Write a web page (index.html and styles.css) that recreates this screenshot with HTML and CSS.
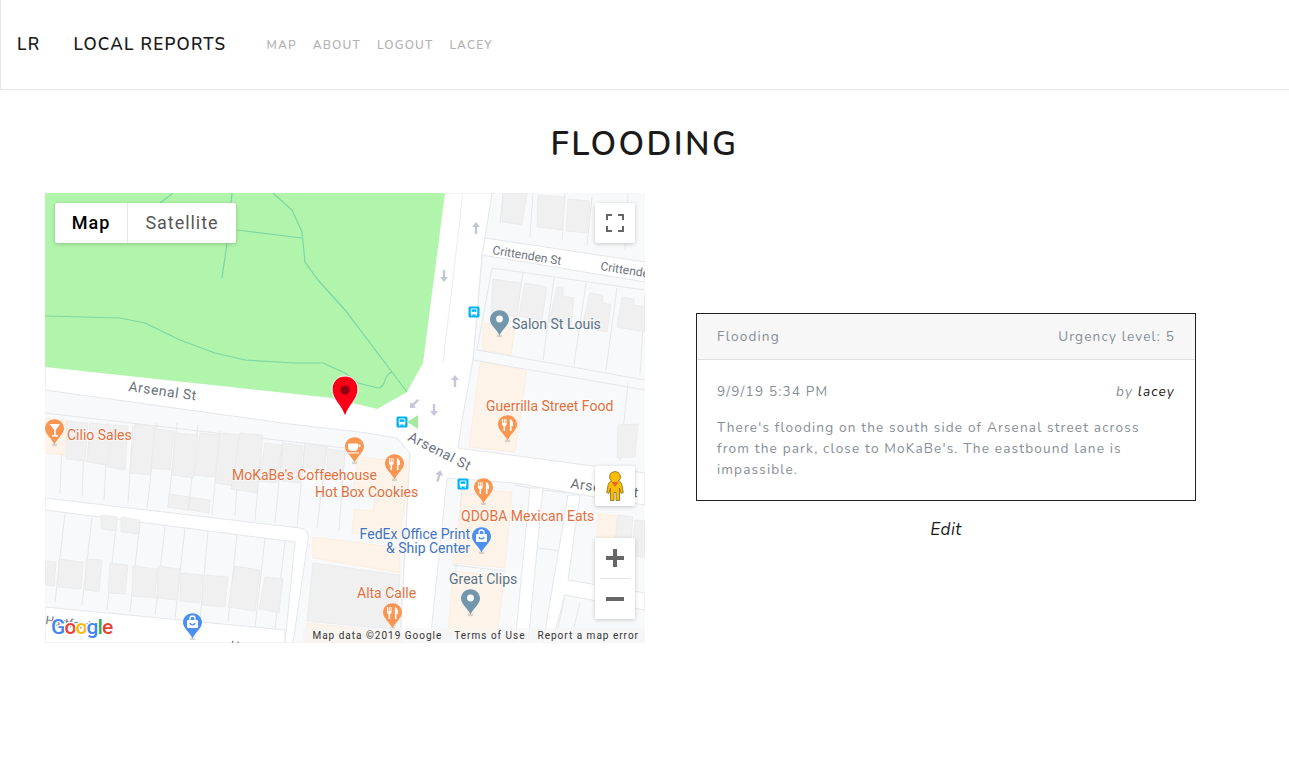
FILE: index.html
```html
<!DOCTYPE html>
<html lang="en">
<head>
<meta charset="utf-8">
<title>Flooding - Local Reports</title>
<link rel="stylesheet" href="styles.css">
</head>
<body>
<nav class="navbar">
  <a class="brand brand-short">LR</a>
  <a class="brand brand-long">LOCAL REPORTS</a>
  <ul class="nav-links">
    <li>MAP</li><li>ABOUT</li><li>LOGOUT</li><li>LACEY</li>
  </ul>
</nav>
<h1 class="page-title">FLOODING</h1>
<main class="content">
  <section class="map">
    <svg class="map-canvas" width="600" height="450" viewBox="0 0 600 450" xmlns="http://www.w3.org/2000/svg">
      <defs>
        <symbol id="pin" viewBox="0 0 20 29" overflow="visible">
          <ellipse cx="10" cy="27" rx="3" ry="1.500" fill="#000" opacity=".14"/>
          <path d="M10 0C4.500 0 0 4.400 0 9.800 0 16 6.800 19.500 10 26.500 13.200 19.500 20 16 20 9.800 20 4.400 15.500 0 10 0Z"/>
        </symbol>
        <g id="fork" fill="#fff">
          <path d="M-5.500-6h1v4h.8v-4h1v4h.8v-4h1v5.300c0 1-.7 1.600-1.500 1.800V6h-1.600V1.100c-.8-.2-1.500-.8-1.500-1.800Z"/>
          <path d="M2.400 6V-6c2 .5 3.200 2.600 3.200 5.500V1H4V6Z"/>
        </g>
        <g id="bus">
          <rect x="-5.500" y="-5.500" width="11" height="11" rx="1.500" fill="#00b3f0"/>
          <rect x="-3.300" y="-3.500" width="6.600" height="6" rx="1" fill="#fff"/>
          <rect x="-2.400" y="-2.600" width="4.800" height="2.400" fill="#00b3f0"/>
          <rect x="-3" y="2.500" width="1.500" height="1.200" fill="#fff"/>
          <rect x="1.500" y="2.500" width="1.500" height="1.200" fill="#fff"/>
        </g>
        <path id="arrow-up" d="M0-6 4-1H1.200V6H-1.200V-1H-4Z" fill="#c4c7da"/>
        <g id="bag" fill="none" stroke="#fff" stroke-width="1.300">
          <rect x="-5.500" y="-3" width="11" height="8" rx="1" fill="#fff" stroke="none"/>
          <path d="M-2.500-3V-4.500A2.500 2.500 0 0 1 2.500-4.500V-3"/>
          <path d="M-2.500 0C-2 2.500 2 2.500 2.500 0" stroke="#4b8ff0"/>
        </g>
      </defs>

      <rect class="ground" width="600" height="450"/>

      <!-- parcel lines -->
      <g class="parcels">
        <path d="M0 220 300 255"/>
        <path d="M18 225 15 300M40 229 37 304M63 230 59 307M88 232 83 310M112 230 102 315M132 230 123 315M153 232 143 318M175 238 167 322M195 240 190 323M217 245 210 328M238 247 230 330M260 250 252 334M282 253 272 335M300 255 294 338"/>
        <path d="M20 320 10 409M47 324 37 412M72 325 62 417M95 329 85 419M120 334 110 422M140 335 130 425M163 339 155 427M192 342 183 429M220 345 210 434M240 348 230 435"/>
        <path d="M488 0 485 44M520 0 517 47M547 4 542 52M583 0 580 57"/>
        <path d="M458 0 455 30"/>
        <path d="M447 75 600 97M447 75 432 157"/>
        <path d="M478 80 465 162M509 85 498 167M541 90 529 172M572 95 561 177M600 100 595 182"/>
        <path d="M432 157 600 187M428 167 600 197M437 62 428 167"/>
        <path d="M583 190 575 268"/>
        <path d="M417 295 405 450"/>
        <path d="M408 372 460 378"/>
        <path d="M365 260 355 450"/>
        <path d="M470 292 485 295"/>
        <path d="M498 297 522 300M493 355 516 358"/>
        <path d="M575 322 568 390"/>
        <path d="M520 402 510 450M535 410 525 450"/>
      </g>

      <!-- roads -->
      <g class="roads">
        <path d="M400 0H447L440 45 437 62 428 167 417 227 413 255 600 280V312L550 304 470 290 402 285 385 450H355L365 260 352 245 322 240 245 231 0 197V174Z"/>
        <path d="M440 45 600 69V89L437 62Z"/>
        <path d="M0 305 255 335Q265 337 263 347L248 450H240L250 349 0 317Z"/>
        <path d="M0 414 240 437V450H0Z"/>
        <path d="M485 295H498L483 450H470Z"/>
        <path d="M523 302H535L523 387 600 400V417L520 402 507 450H498Z"/>
      </g>
      <path class="median" d="M418 0 398 170"/>

      <!-- footprints -->
      <g class="footprint">
        <path d="M438 130 470 135 466 162 438 157Z"/>
        <path d="M435 170 482 177 470 259 424 254Z"/>
        <path d="M-2 225 22 228 19 262 -2 260Z"/>
        <path d="M313 264 365 269 355 345 307 340 309 316 328 318 330 300 308 298Z"/>
        <path d="M268 344 355 355 355 380 268 365Z"/>
        <path d="M418 297 467 299 460 375 408 370Z"/>
        <path d="M408 378 460 383 452 440 403 440Z"/>
        <path d="M262 430 355 440 352 450H262Z"/>
        <path d="M553 320 572 323 567 370 550 365Z"/>
      </g>

      <!-- buildings -->
      <g class="buildings">
        <path d="M458 0 482 0 477 32 457 29Z"/>
        <path d="M493 2 520 4 517 37 492 34Z"/>
        <path d="M523 6 545 8 542 40 521 38Z"/>
        <path d="M448 86 476 90 472 124 446 119Z"/>
        <path d="M480 90 502 94 497 127 474 123Z"/>
        <path d="M512 94 518 94 518 103 529 105 526 132 504 129Z"/>
        <path d="M545 100 558 102 558 110 566 112 562 139 537 134Z"/>
        <path d="M577 104 589 106 589 112 600 114 600 139 572 134Z"/>
        <path d="M22 228 43 230 40 268 21 266Z"/>
        <path d="M45 230 66 232 62 272 42 269Z"/>
        <path d="M68 232 83 233 80 277 63 274Z"/>
        <path d="M90 231 110 233 105 282 85 280Z"/>
        <path d="M110 236 129 238 125 277 106 275Z"/>
        <path d="M130 240 153 242 148 285 127 282Z"/>
        <path d="M155 240 175 242 170 284 149 282Z"/>
        <path d="M175 240 195 242 190 293 170 290Z"/>
        <path d="M195 240 218 242 212 300 186 296Z"/>
        <path d="M220 250 237 252 232 290 213 288Z"/>
        <path d="M238 250 258 253 255 290 236 288Z"/>
        <path d="M260 250 282 254 279 278 258 275Z"/>
        <path d="M283 256 300 258 298 285 282 282Z"/>
        <path d="M124 301 144 304 143 317 123 314Z"/>
        <path d="M145 304 165 307 164 320 144 317Z"/>
        <path d="M56 322 72 324 71 338 56 336Z"/>
        <path d="M76 324 95 327 94 341 76 339Z"/>
        <path d="M0 368 11 369 9 393 0 392Z"/>
        <path d="M14 366 38 369 36 396 13 394Z"/>
        <path d="M41 366 57 367 54 399 40 397Z"/>
        <path d="M65 370 83 372 80 401 63 400Z"/>
        <path d="M88 373 112 376 110 405 87 403Z"/>
        <path d="M113 373 135 376 133 407 112 405Z"/>
        <path d="M136 380 157 382 155 410 135 408Z"/>
        <path d="M158 382 183 384 180 414 157 412Z"/>
        <path d="M190 373 215 377 210 418 183 414Z"/>
        <path d="M220 384 238 386 234 420 214 416Z"/>
        <path d="M268 370 355 382 350 437 262 428Z"/>
        <path d="M573 232 593 231 590 264 572 265Z"/>
        <path d="M573 322 588 324 585 360 569 358Z"/>
        <path d="M590 327 600 328 600 365 587 362Z"/>
      </g>

      <!-- park -->
      <path class="park" d="M0 0H400L378 170 362 199 332 216 287 205 0 174Z"/>
      <g class="park-paths">
        <path d="M0 123 75 125 100 130 135 147 170 160 200 167 250 170 278 170 300 180 313 190 333 195Q338 195 340 187 342 181 347 179"/>
        <path d="M228 0 247 17 257 39 260 69 273 87 300 117 347 179 362 199"/>
        <path d="M187 0 182 50 177 85"/>
        <path d="M192 37 257 45"/>
        <path d="M128 0 115 10"/>
      </g>

      <!-- road arrows -->
      <use href="#arrow-up" transform="translate(431 35)"/>
      <use href="#arrow-up" transform="translate(399 83) rotate(180)"/>
      <use href="#arrow-up" transform="translate(410 188)"/>
      <use href="#arrow-up" transform="translate(389 217) rotate(180)"/>
      <use href="#arrow-up" transform="translate(369 211) rotate(225)"/>
      <use href="#arrow-up" transform="translate(394 283) rotate(15)"/>

      <!-- labels -->
      <text class="lbl road wide" x="83" y="198" transform="rotate(8 83 198)">Arsenal St</text>
      <text class="lbl road wide" x="362" y="247" transform="rotate(27 362 247)">Arsenal St</text>
      <text class="lbl road wide" x="525" y="295" transform="rotate(8 525 295)">Arsenal St</text>
      <text class="lbl road small" x="447" y="61" transform="rotate(9 447 61)">Crittenden St</text>
      <text class="lbl road small" x="555" y="77" transform="rotate(9 555 77)">Crittenden St</text>
      <text class="lbl road small" x="0" y="431" transform="rotate(8 0 431)">Hartford St</text>
      <text class="lbl road small" x="185" y="456" transform="rotate(8 185 456)">Hauf</text>
      <text class="lbl grey" x="467" y="136">Salon St Louis</text>
      <text class="lbl grey" x="404" y="391">Great Clips</text>
      <text class="lbl orange" x="441" y="218">Guerrilla Street Food</text>
      <text class="lbl orange" x="22" y="247">Cilio Sales</text>
      <text class="lbl orange" x="187" y="287">MoKaBe's Coffeehouse</text>
      <text class="lbl orange" x="270" y="304">Hot Box Cookies</text>
      <text class="lbl orange" x="416" y="328">QDOBA Mexican Eats</text>
      <text class="lbl orange" x="312" y="405">Alta Calle</text>
      <text class="lbl blue end" x="425" y="346">FedEx Office Print</text>
      <text class="lbl blue end" x="425" y="360">&amp; Ship Center</text>

      <!-- poi pins -->
      <g class="pin-grey">
        <use href="#pin" x="445" y="117" width="19" height="28"/>
        <circle cx="454.500" cy="126" r="3.400" fill="#fff"/>
        <use href="#pin" x="416" y="396" width="19" height="28"/>
        <circle cx="425.500" cy="405" r="3.400" fill="#fff"/>
      </g>
      <g class="pin-orange">
        <use href="#pin" x="453" y="222" width="19" height="28"/>
        <use href="#pin" x="0" y="226" width="19" height="28"/>
        <use href="#pin" x="300" y="244" width="19" height="28"/>
        <use href="#pin" x="340" y="261" width="19" height="28"/>
        <use href="#pin" x="429" y="285" width="19" height="28"/>
        <use href="#pin" x="338" y="410" width="19" height="28"/>
      </g>
      <use href="#fork" transform="translate(462.500 232)"/>
      <use href="#fork" transform="translate(349.500 271)"/>
      <use href="#fork" transform="translate(438.500 295)"/>
      <use href="#fork" transform="translate(347.500 420)"/>
      <path d="M4.500 231H15L10.800 237V242H13V243.500H7V242H9.200V237Z" fill="#fff"/>
      <path d="M303 250.500H313V254A4 4 0 0 1 309 258H307A4 4 0 0 1 303 254ZM313.500 251.500H315.500V254H313.500ZM302.500 259.500H314V260.500H302.500Z" fill="#fff"/>
      <g class="pin-blue">
        <use href="#pin" x="427" y="334" width="19" height="28"/>
        <use href="#pin" x="138" y="420" width="19" height="28"/>
      </g>
      <use href="#bag" transform="translate(436.500 344)"/>
      <use href="#bag" transform="translate(147.500 430)"/>

      <!-- bus stops -->
      <use href="#bus" transform="translate(429 119)"/>
      <use href="#bus" transform="translate(357 229)"/>
      <use href="#bus" transform="translate(418 291)"/>
      <path d="M362 229 373 222V236Z" fill="#a7e9a3"/>

      <!-- report marker -->
      <path class="marker" d="M300 183C292.500 183 287 189 287 196 287 207 297 212 300 224 303 212 313 207 313 196 313 189 307.500 183 300 183Z"/>
      <circle cx="300" cy="197" r="4.500" fill="#8e0010"/>

      <!-- google logo -->
      <text class="logo" x="6" y="441"><tspan fill="#4285f4">G</tspan><tspan fill="#ea4335">o</tspan><tspan fill="#fbbc05">o</tspan><tspan fill="#4285f4">g</tspan><tspan fill="#34a853">l</tspan><tspan fill="#ea4335">e</tspan></text>
    </svg>

    <div class="map-type">
      <button class="type-btn type-active">Map</button>
      <button class="type-btn">Satellite</button>
    </div>

    <button class="ctl ctl-full" aria-label="Toggle fullscreen">
      <svg width="18" height="18" viewBox="0 0 18 18"><path d="M0 6V0H6V2H2V6ZM12 0H18V6H16V2H12ZM18 12V18H12V16H16V12ZM6 18H0V12H2V16H6Z" fill="#666"/></svg>
    </button>

    <button class="ctl ctl-peg" aria-label="Street view">
      <svg width="18" height="30" viewBox="0 0 18 30"><path d="M9 .5A5.500 5.500 0 0 0 5.600 10.300C3.500 10.800 2.600 11.600 2.200 13.500L.7 21.500 3 22.300 4.500 17V29.500H8V21.500H10V29.500H13.500V17L15 22.300 17.300 21.500 15.800 13.500C15.400 11.600 14.500 10.800 12.400 10.300A5.500 5.500 0 0 0 9 .5Z" fill="#fdbc00" stroke="#80691c" stroke-width=".8"/><path d="M5.500 11 9 16 12.500 11Z" fill="#e2672b"/></svg>
    </button>

    <div class="ctl-zoom">
      <button class="zoom-btn" aria-label="Zoom in">
        <svg width="18" height="18" viewBox="0 0 18 18"><path d="M7 0H11V7H18V11H11V18H7V11H0V7H7Z" fill="#666"/></svg>
      </button>
      <span class="zoom-sep"></span>
      <button class="zoom-btn" aria-label="Zoom out">
        <svg width="18" height="18" viewBox="0 0 18 18"><path d="M0 7H18V11H0Z" fill="#666"/></svg>
      </button>
    </div>

    <div class="attribution">
      <span>Map data ©2019 Google</span><span>Terms of Use</span><span>Report a map error</span>
    </div>
  </section>

  <section class="side">
    <article class="card">
      <header class="card-head"><span>Flooding</span><span>Urgency level: 5</span></header>
      <div class="card-body">
        <div class="meta"><span>9/9/19 5:34 PM</span><em>by <b class="author">lacey</b></em></div>
        <p class="desc">There's flooding on the south side of Arsenal street across from the park, close to MoKaBe's. The eastbound lane is impassible.</p>
      </div>
    </article>
    <a class="edit">Edit</a>
  </section>
</main>
</body>
</html>
```
FILE: styles.css
```css
* { box-sizing: border-box; }
html, body { margin: 0; padding: 0; }
body {
  background: #fff;
  color: #1a1a1a;
  font-family: "Nunito", "Lato", "Noto Sans", sans-serif;
  height: 760px;
  overflow: hidden;
}
.navbar {
  height: 90px;
  display: flex;
  align-items: center;
  padding: 0 16px;
  border-left: 1px solid #e6e6e6;
  border-bottom: 1px solid #e6e6e6;
}
.brand {
  color: #1a1a1a;
  font-size: 17px;
  letter-spacing: 1.25px;
  font-weight: 600;
}
.brand-short { margin-right: 33px; }
.brand-long { margin-right: 40px; }
.nav-links {
  list-style: none;
  margin: 0;
  padding: 0;
  display: flex;
  gap: 16px;
  color: #b3b3b3;
  font-size: 12px;
  letter-spacing: 1.15px;
  font-weight: 600;
}
.page-title {
  margin: 0;
  padding-top: 35px;
  height: 103px;
  text-align: center;
  font-size: 33px;
  line-height: 40px;
  font-weight: 600;
  letter-spacing: 2.4px;
}
.content {
  display: flex;
  padding-left: 45px;
}
.map {
  position: relative;
  flex: 0 0 600px;
  height: 450px;
  overflow: hidden;
}
.map-canvas { display: block; }
.ground { fill: #f8f9fa; }
.roads path { fill: #fff; stroke: #e6e7ea; stroke-width: 1; }
.median { fill: none; stroke: #eceded; stroke-width: 1; }
.parcels path { fill: none; stroke: #e6e7ea; stroke-width: 1; }
.footprint path { fill: #fdf3e8; stroke: #fbe9d6; stroke-width: .6; }
.buildings path { fill: #f0f0f0; stroke: #e8e8e8; stroke-width: .7; }
.park { fill: #b1f4ab; }
.park-paths path { fill: none; stroke: #7ed6a0; stroke-width: 1.2; }
.lbl {
  font-family: "Roboto", sans-serif;
  font-size: 14px;
  paint-order: stroke;
  stroke: #fff;
  stroke-width: 1.500px;
  stroke-opacity: .6;
}
.road { fill: #6a737d; }
.wide { letter-spacing: .5px; }
.small { font-size: 12px; }
.grey { fill: #5b7183; }
.orange { fill: #e2703e; }
.blue { fill: #3f73c2; }
.end { text-anchor: end; }
.pin-grey { fill: #7297ad; }
.pin-orange { fill: #fb9552; }
.pin-blue { fill: #4b8ff0; }
.marker { fill: #f90016; stroke: #fff; stroke-width: 1; }
.logo {
  font-family: "Roboto", sans-serif;
  font-size: 21px;
  font-weight: 500;
  letter-spacing: -.9px;
  paint-order: stroke;
  stroke: #fff;
  stroke-width: 2.500px;
}
button {
  border: 0;
  padding: 0;
  margin: 0;
  background: #fff;
  display: flex;
  align-items: center;
  justify-content: center;
}
.map-type {
  position: absolute;
  left: 10px;
  top: 10px;
  width: 181px;
  height: 40px;
  display: flex;
  background: #fff;
  border-radius: 2px;
  box-shadow: 0 1px 4px rgba(0, 0, 0, .2);
}
.type-btn {
  height: 40px;
  padding-bottom: 2px;
  font-family: "Roboto", sans-serif;
  font-size: 18px;
  letter-spacing: .95px;
  color: #565656;
  flex: 1;
  background: transparent;
}
.type-active {
  flex: 0 0 73px;
  color: #000;
  font-weight: 500;
  border-right: 1px solid #e6e6e6;
}
.ctl {
  position: absolute;
  left: 550px;
  width: 40px;
  height: 40px;
  border-radius: 2px;
  box-shadow: 0 1px 4px rgba(0, 0, 0, .2);
}
.ctl-full { top: 10px; }
.ctl-peg { top: 273px; }
.ctl-zoom {
  position: absolute;
  left: 550px;
  top: 345px;
  width: 40px;
  height: 81px;
  background: #fff;
  border-radius: 2px;
  box-shadow: 0 1px 4px rgba(0, 0, 0, .2);
  display: flex;
  flex-direction: column;
  align-items: center;
}
.zoom-btn { width: 40px; height: 40px; }
.zoom-sep { width: 30px; height: 1px; background: #e6e6e6; }
.attribution {
  position: absolute;
  right: 0;
  bottom: 0;
  height: 15px;
  padding: 0 6px 0 9px;
  display: flex;
  gap: 12px;
  align-items: center;
  background: rgba(245, 245, 245, .7);
  font-family: "Roboto", sans-serif;
  font-size: 10px;
  letter-spacing: 1px;
  color: #333;
  white-space: nowrap;
}
.side {
  flex: 0 0 602px;
  padding-top: 120px;
  display: flex;
  flex-direction: column;
  align-items: center;
}
.card {
  width: 500px;
  height: 188px;
  border: 1px solid #222;
  color: #868e96;
  font-size: 13.600px;
  letter-spacing: 1.150px;
}
.card-head {
  height: 46px;
  padding: 0 20px;
  display: flex;
  align-items: center;
  justify-content: space-between;
  background: #f7f7f7;
  border-bottom: 1px solid #dfdfdf;
}
.card-body { padding: 21px 20px 0; }
.meta {
  display: flex;
  justify-content: space-between;
  line-height: 21px;
}
.author { color: #1a1a1a; font-weight: 400; }
.desc {
  margin: 15px 0 0;
  line-height: 21px;
}
.edit {
  margin-top: 19px;
  font-size: 17px;
  line-height: 20px;
  font-style: italic;
  letter-spacing: .5px;
  color: #1a1a1a;
}
```
